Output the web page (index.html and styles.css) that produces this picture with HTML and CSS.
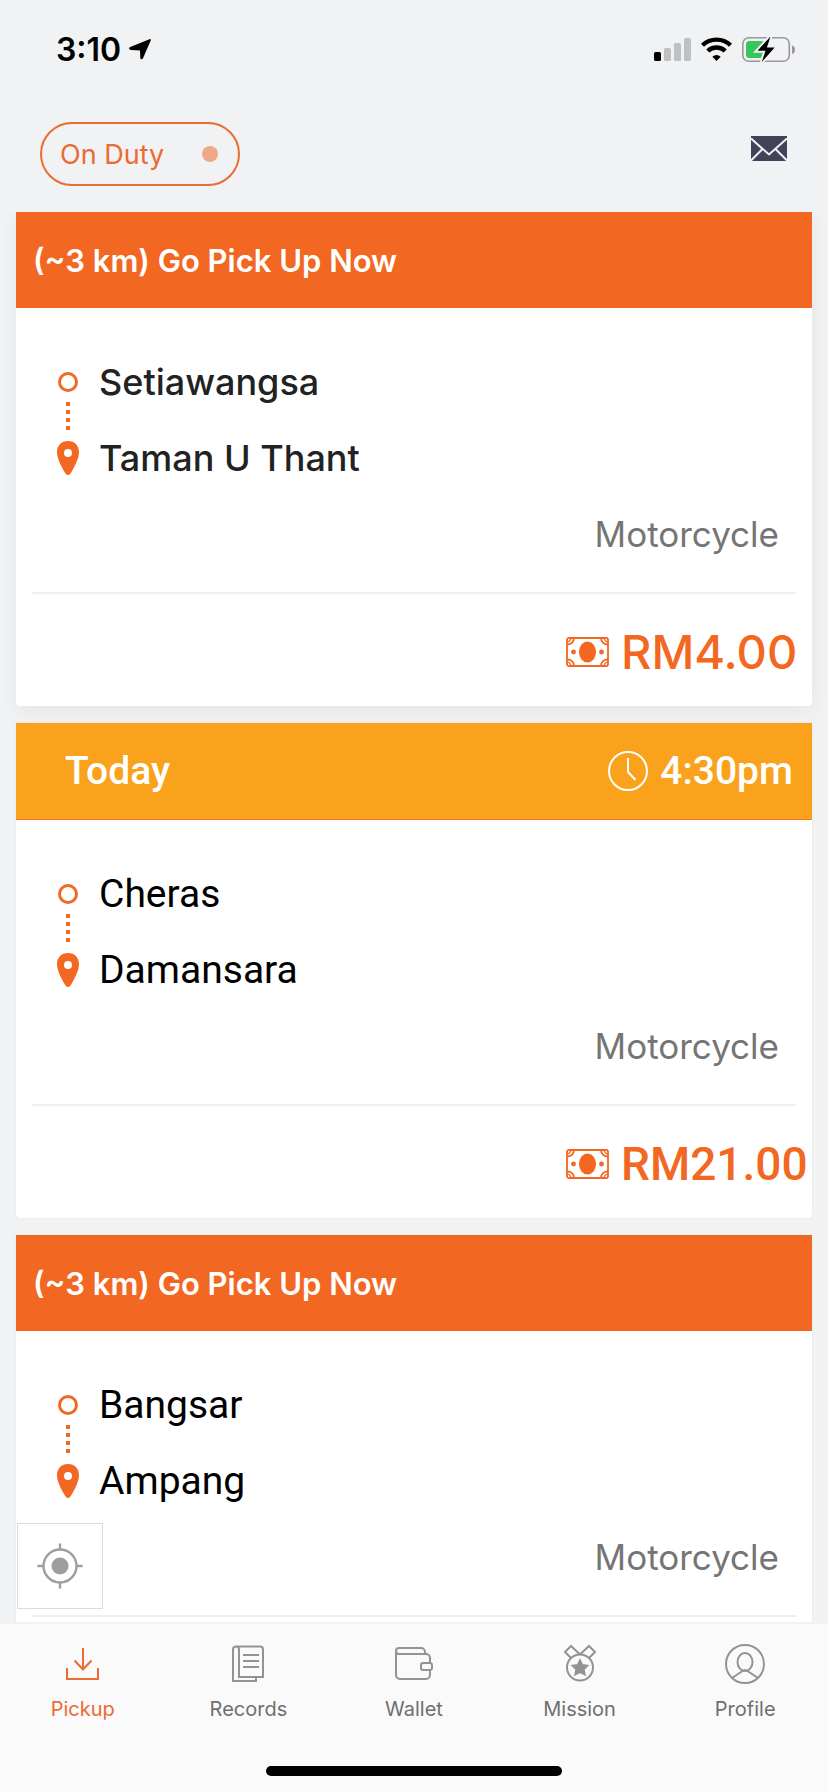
FILE: index.html
```html
<!DOCTYPE html>
<html lang="en">
<head>
<meta charset="utf-8">
<meta name="viewport" content="width=device-width, initial-scale=1">
<title>Pickup</title>
<link rel="stylesheet" href="styles.css">
</head>
<body>
<svg class="sprite" aria-hidden="true">
  <symbol id="route" viewBox="0 0 22 104">
    <circle cx="11" cy="10" r="8.500" fill="none" stroke="currentColor" stroke-width="3"/>
    <path fill="currentColor" d="M9 30h4v4H9zM9 38h4v4H9zM9 46h4v4H9zM9 54h4v4H9z"/>
    <path fill="currentColor" fill-rule="evenodd" d="M11 69C4.500 69 0 73.500 0 80c0 6 3.500 13 7 19 1.500 2.500 2.500 4 4 4s2.500-1.500 4-4c3.500-6 7-13 7-19 0-6.500-4.500-11-11-11zM11 77a4 4 0 1 1 0 8 4 4 0 0 1 0-8z"/>
  </symbol>
  <symbol id="cash" viewBox="0 0 43 30">
    <g fill="none" stroke="currentColor" stroke-width="1.800">
      <rect x="1" y="1" width="41" height="28" rx="2"/>
      <path d="M8 1c0 4-3 6.500-7 6.500M35 1c0 4 3 6.500 7 6.500M8 29c0-4-3-6.500-7-6.500M35 29c0-4 3-6.500 7-6.500"/>
      <path stroke-width="1.200" d="M5 1c0 2-2 4-4 4M38 1c0 2 2 4 4 4M5 29c0-2-2-4-4-4M38 29c0-2 2-4 4-4"/>
    </g>
    <g fill="currentColor"><ellipse cx="21.500" cy="15" rx="8.500" ry="10.500"/><circle cx="7.500" cy="15" r="2.400"/><circle cx="35.500" cy="15" r="2.400"/></g>
  </symbol>
</svg>

<div class="status">
  <span class="clock">3:10</span>
  <svg class="arrow" viewBox="0 0 22 22"><path d="M20.500.200c.900-.400 1.600.300 1.200 1.300L14 19.300c-.600 1.400-2.600 1.200-2.700-.400L11 11.500 2.200 11C-.100 10.900-.500 8.700 1.300 8z"/></svg>
  <svg class="signals" viewBox="0 0 142 28">
    <rect x="0" y="16" width="7" height="9" rx="1.500"/>
    <g fill="#bfc0c2"><rect x="10" y="12" width="7" height="13" rx="1.500"/><rect x="20" y="7" width="7" height="18" rx="1.500"/><rect x="30" y="2" width="7" height="23" rx="1.500"/></g>
    <g fill="none" stroke="#000" stroke-width="4.400"><path d="M48.500 9.300a20 20 0 0 1 28 0M53.800 15a12.500 12.500 0 0 1 17.400 0"/></g>
    <path d="M62.500 25l-4.200-4.300a6.200 6.200 0 0 1 8.400 0z"/>
    <rect x="88.800" y="1.800" width="46.500" height="23.500" rx="6" fill="none" stroke="#98989b" stroke-width="1.600"/>
    <path fill="#98989b" d="M138 9.500c4 1 4 7.500 0 8.500z"/>
    <rect x="92" y="5" width="19" height="17" rx="3.500" fill="#34c759"/>
    <path stroke="#f1f2f4" stroke-width="4" paint-order="stroke" d="M116.500.500l-13 14.200h8L107.800 26 120.700 11.500h-7.800z"/>
  </svg>
</div>

<header class="top">
  <button class="duty" type="button"><span>On Duty</span><i class="dot"></i></button>
  <button class="mail" type="button" aria-label="Messages">
    <svg viewBox="0 0 36 25"><path fill="#42435a" d="M0 0h36v25H0z"/><path fill="none" stroke="#f1f2f4" stroke-width="2" d="M0 2.500l18 16 18-16M0 24.500L11.500 13M36 24.500L24.500 13"/></svg>
  </button>
</header>

<main class="feed">
  <article class="card raised">
    <h2 class="banner near">(~3 km) Go Pick Up Now</h2>
    <div class="trip">
      <svg class="route"><use href="#route"/></svg>
      <p class="stops soft"><span>Setiawangsa</span><span>Taman U Thant</span></p>
    </div>
    <p class="vehicle">Motorcycle</p>
    <p class="fare"><svg class="cash"><use href="#cash"/></svg><span class="amount">RM4.00</span></p>
  </article>

  <article class="card">
    <h2 class="banner later"><span>Today</span>
      <span class="time"><svg class="watch" viewBox="0 0 40 40"><g fill="none" stroke="currentColor" stroke-width="2"><circle cx="20" cy="20" r="19"/><path d="M20 7v14l7.500 8"/></g></svg>4:30pm</span></h2>
    <div class="trip">
      <svg class="route"><use href="#route"/></svg>
      <p class="stops"><span>Cheras</span><span>Damansara</span></p>
    </div>
    <p class="vehicle">Motorcycle</p>
    <p class="fare"><svg class="cash"><use href="#cash"/></svg><span class="amount strong">RM21.00</span></p>
  </article>

  <article class="card">
    <h2 class="banner near">(~3 km) Go Pick Up Now</h2>
    <div class="trip">
      <svg class="route"><use href="#route"/></svg>
      <p class="stops"><span>Bangsar</span><span>Ampang</span></p>
    </div>
    <p class="vehicle">Motorcycle</p>
    <div class="fare"></div>
  </article>

  <button class="locate" type="button" aria-label="Locate me">
    <svg viewBox="0 0 46 46"><g fill="none" stroke="#9e9e9e" stroke-width="2.400"><circle cx="23" cy="23" r="16.500"/><path d="M23 .500v6M23 39.500v6M.500 23h6M39.500 23h6"/></g><circle cx="23" cy="23" r="8.500" fill="#9e9e9e"/></svg>
  </button>
</main>

<footer class="bottom">
  <nav class="tabs">
    <a class="tab active" href="#pickup"><svg viewBox="0 0 40 40"><path d="M20 8v22M11.500 20.500L20 29.500l8.500-9M4 28v11h31V28"/></svg>Pickup</a>
    <a class="tab" href="#records"><svg viewBox="0 0 40 40"><path d="M8 6.500h24a3 3 0 0 1 3 3V37H11V9.500a3 3 0 0 0-6 0V41h23v-4M8 6.500a3 3 0 0 0-3 3M15 15h16M15 21h16M15 27h16"/></svg>Records</a>
    <a class="tab" href="#wallet"><svg viewBox="0 0 40 40"><path d="M2 11v24a4 4 0 0 0 4 4h26a4 4 0 0 0 4-4v-5M36 23v-5a4 4 0 0 0-4-4H5a3 3 0 0 1-3-3 3 3 0 0 1 3-3h22a4 4 0 0 1 4 4v2M29 23h7a2 2 0 0 1 2 2v3a2 2 0 0 1-2 2h-7a2 2 0 0 1-2-2v-3a2 2 0 0 1 2-2z"/></svg>Wallet</a>
    <a class="tab" href="#mission"><svg viewBox="0 0 40 40"><circle cx="20" cy="27.500" r="13"/><path d="M11 18l-6-6 6-6 9 8.500M29 18l6-6-6-6-9 8.500"/><path fill="currentColor" d="M20 20.500l2.300 4.600 5 .700-3.600 3.500.900 5-4.600-2.400-4.600 2.400.900-5-3.600-3.500 5-.700z"/></svg>Mission</a>
    <a class="tab" href="#profile"><svg viewBox="0 0 40 40"><circle cx="20" cy="24" r="19"/><ellipse cx="20" cy="22" rx="7.500" ry="9"/><path d="M7 38l10.500-7a5 5 0 0 1 5 0L33 38"/></svg>Profile</a>
  </nav>
  <div class="home"></div>
</footer>
</body>
</html>
```
FILE: styles.css
```css
* { box-sizing: border-box; }

body {
  margin: 0;
  height: 100vh;
  display: flex;
  flex-direction: column;
  background: #f1f2f4;
  color: #000;
  font-family: Inter, "Liberation Sans", sans-serif;
}

h2, p { margin: 0; }

button {
  font: inherit;
  background: none;
  border: 0;
  padding: 0;
}

svg { display: block; overflow: visible; }

.sprite { position: absolute; width: 0; height: 0; }

.status {
  display: flex;
  align-items: center;
  padding: 30px 32px 0 56px;
  height: 70px;
}
.clock { font-size: 32px; font-weight: 600; line-height: 40px; }
.arrow { width: 22px; height: 22px; margin-left: 8px; }
.signals { width: 142px; height: 28px; margin-left: auto; }

.top {
  display: flex;
  justify-content: space-between;
  align-items: flex-start;
  padding: 52px 41px 26px 40px;
}
.duty {
  display: flex;
  align-items: center;
  justify-content: space-between;
  width: 200px;
  height: 64px;
  padding: 0 20px 0 18px;
  border: 2px solid #ec6a33;
  border-radius: 32px;
  color: #ec6a33;
  font-size: 27px;
  font-weight: 400;
}
.dot { width: 16px; height: 16px; border-radius: 50%; background: #f1a888; }
.mail { margin-top: 14px; }
.mail svg { width: 36px; height: 25px; }

.feed {
  position: relative;
  flex: 1;
  min-height: 0;
  overflow: hidden;
  display: flex;
  flex-direction: column;
  gap: 17px;
  padding: 0 16px;
}
.card {
  flex: none;
  background: #fff;
  border-radius: 0 0 4px 4px;
  box-shadow: 0 0 2px rgba(0, 0, 0, 0.08);
}
.raised { box-shadow: 0 4px 20px rgba(0, 0, 0, 0.06); }

.banner {
  display: flex;
  align-items: center;
  justify-content: space-between;
  height: 96px;
  color: #fff;
}
.near { padding: 0 17px; background: #f26722; font-size: 31px; font-weight: 600; }
.later {
  height: 97px;
  padding: 0 19px 0 49px;
  background: #faa21b;
  border-bottom: 1px solid #ee7a24;
  font-family: Roboto, sans-serif;
  font-size: 39px;
  font-weight: 500;
}
.time { display: flex; align-items: center; gap: 12px; }
.watch { width: 40px; height: 40px; }

.trip { display: flex; gap: 20px; padding: 36px 41px 0; }
.route { width: 22px; height: 104px; margin-top: 28px; color: #f26722; flex: none; }
.stops {
  display: flex;
  flex-direction: column;
  font-family: Roboto, sans-serif;
  font-size: 39px;
  line-height: 76px;
}
.soft { font-family: Inter, sans-serif; font-size: 36px; font-weight: 500; color: #222; }

.vehicle {
  padding: 0 33px;
  text-align: right;
  font-size: 35px;
  line-height: 76px;
  font-weight: 400;
  color: #757575;
}
.fare {
  display: flex;
  align-items: center;
  justify-content: flex-end;
  gap: 12px;
  height: 114px;
  margin: 20px 16px 0;
  padding-top: 4px;
  border-top: 2px solid #eeeff0;
  color: #f26722;
}
.fare .amount { width: 175px; white-space: nowrap; font-size: 47px; font-weight: 500; line-height: 56px; }
.fare .strong { font-family: Roboto, sans-serif; font-size: 46px; font-weight: 500; }
.cash { width: 43px; height: 30px; }

.locate {
  position: absolute;
  left: 17px;
  bottom: 13px;
  width: 86px;
  height: 86px;
  display: grid;
  place-items: center;
  background: #fff;
  border: 1px solid #dcdcdc;
}
.locate svg { width: 46px; height: 46px; }

.bottom {
  background: #fafafa;
  border-top: 2px solid #f0f1f3;
  padding: 14px 0 16px;
}
.tabs { display: grid; grid-template-columns: repeat(5, 1fr); }
.tab {
  display: flex;
  flex-direction: column;
  align-items: center;
  gap: 15px;
  color: #6f6f6f;
  font-size: 20px;
  line-height: 24px;
  text-decoration: none;
}
.tab svg { width: 40px; height: 44px; fill: none; stroke: currentColor; stroke-width: 2; color: #939393; }
.active, .active svg { color: #ec6a33; }
.home { width: 296px; height: 10px; margin: 45px auto 0; border-radius: 5px; background: #000; }
```
